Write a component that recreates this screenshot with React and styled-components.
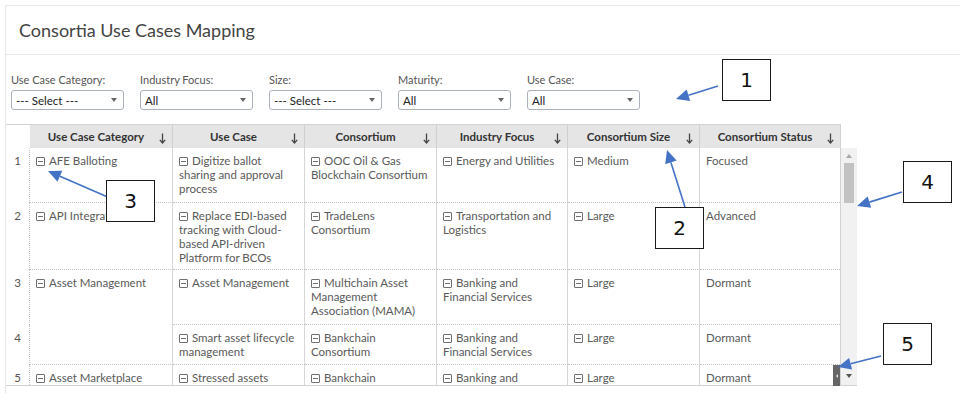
import styled, { createGlobalStyle } from "styled-components";

const GlobalStyle = createGlobalStyle`
  body {
    margin: 0;
    background: #fff;
    font-family: Lato, "Liberation Sans", sans-serif;
  }
`;

const filters = [
  { label: "Use Case Category:", value: "--- Select ---" },
  { label: "Industry Focus:", value: "All" },
  { label: "Size:", value: "--- Select ---" },
  { label: "Maturity:", value: "All" },
  { label: "Use Case:", value: "All" },
];

const columns = [
  "Use Case Category",
  "Use Case",
  "Consortium",
  "Industry Focus",
  "Consortium Size",
  "Consortium Status",
];

const widths = [24, 143, 132, 132, 131, 132, 140];

const rows = [
  {
    h: 55,
    cat: "AFE Balloting",
    useCase: "Digitize ballot sharing and approval process",
    consortium: "OOC Oil & Gas Blockchain Consortium",
    industry: "Energy and Utilities",
    size: "Medium",
    status: "Focused",
  },
  {
    h: 67,
    cat: "API Integration",
    useCase: "Replace EDI-based tracking with Cloud-based API-driven Platform for BCOs",
    consortium: "TradeLens Consortium",
    industry: "Transportation and Logistics",
    size: "Large",
    status: "Advanced",
  },
  {
    h: 55,
    cat: "Asset Management",
    span: 2,
    useCase: "Asset Management",
    consortium: "Multichain Asset Management Association (MAMA)",
    industry: "Banking and Financial Services",
    size: "Large",
    status: "Dormant",
  },
  {
    h: 40,
    skipCat: true,
    useCase: "Smart asset lifecycle management",
    consortium: "Bankchain Consortium",
    industry: "Banking and Financial Services",
    size: "Large",
    status: "Dormant",
  },
  {
    h: 40,
    cat: "Asset Marketplace",
    useCase: "Stressed assets",
    consortium: "Bankchain Consortium",
    industry: "Banking and Financial Services",
    size: "Large",
    status: "Dormant",
  },
];

const callouts = [
  { n: 1, x: 722, y: 59 },
  { n: 2, x: 655, y: 207 },
  { n: 3, x: 106, y: 180 },
  { n: 4, x: 903, y: 161 },
  { n: 5, x: 883, y: 323 },
];

const arrows = [
  [718, 86, 676, 99],
  [685, 207, 667, 150],
  [110, 198, 48, 171],
  [902, 192, 857, 206],
  [881, 356, 838, 367],
];

const Arrow = ({ a }) => {
  const [x1, y1, x2, y2] = a;
  const ang = Math.atan2(y2 - y1, x2 - x1);
  const len = 13;
  const half = 6;
  const bx = x2 - Math.cos(ang) * len;
  const by = y2 - Math.sin(ang) * len;
  const px = -Math.sin(ang) * half;
  const py = Math.cos(ang) * half;
  return (
    <g>
      <line x1={x1} y1={y1} x2={bx} y2={by} stroke="#4472c4" strokeWidth="1.6" />
      <polygon
        points={`${x2},${y2} ${bx + px},${by + py} ${bx - px},${by - py}`}
        fill="#4472c4"
      />
    </g>
  );
};

const SortArrow = () => (
  <SortIcon width="7" height="11" viewBox="0 0 7 11">
    <path d="M3.5 0.5 V10" stroke="#444" strokeWidth="1.3" />
    <path d="M0.8 6.8 L3.5 10 L6.2 6.8" stroke="#444" strokeWidth="1.3" fill="none" />
  </SortIcon>
);

const Value = ({ text }) => (
  <>
    <Toggle />
    {text}
  </>
);

const App = () => {
  return (
    <Root>
      <GlobalStyle />
      <Panel>
        <PanelHeader>
          <Title>Consortia Use Cases Mapping</Title>
        </PanelHeader>
        <Filters>
          {filters.map((f) => (
            <Filter key={f.label}>
              <FilterLabel>{f.label}</FilterLabel>
              <Select>
                <span>{f.value}</span>
                <Caret />
              </Select>
            </Filter>
          ))}
        </Filters>
        <TableArea>
          <TableFrame>
            <Table>
              <colgroup>
                {widths.map((w, i) => (
                  <col key={i} style={{ width: w }} />
                ))}
              </colgroup>
              <thead>
                <tr>
                  <CornerCell />
                  {columns.map((c) => (
                    <HeadCell key={c}>
                      {c}
                      <SortArrow />
                    </HeadCell>
                  ))}
                </tr>
              </thead>
              <tbody>
                {rows.map((r, i) => (
                  <Row key={i} $h={r.h}>
                    <NumCell>{i + 1}</NumCell>
                    {!r.skipCat && (
                      <Cell rowSpan={r.span || 1}>
                        <Value text={r.cat} />
                      </Cell>
                    )}
                    <Cell>
                      <Value text={r.useCase} />
                    </Cell>
                    <Cell>
                      <Value text={r.consortium} />
                    </Cell>
                    <Cell>
                      <Value text={r.industry} />
                    </Cell>
                    <Cell>
                      <Value text={r.size} />
                    </Cell>
                    <Cell>{r.status}</Cell>
                  </Row>
                ))}
              </tbody>
            </Table>
          </TableFrame>
          <ScrollTrack>
            <ScrollUp />
            <Thumb />
            <ScrollDown />
          </ScrollTrack>
        </TableArea>
      </Panel>

      <ResizeGrip>
        <GripArrow />
      </ResizeGrip>

      <Overlay width="960" height="419" viewBox="0 0 960 419">
        {arrows.map((a, i) => (
          <Arrow key={i} a={a} />
        ))}
      </Overlay>

      {callouts.map((c) => (
        <Callout key={c.n} $x={c.x} $y={c.y}>
          {c.n}
        </Callout>
      ))}
    </Root>
  );
};

const Root = styled.div`
  position: relative;
  width: 960px;
  height: 419px;
  overflow: hidden;
  background: #fff;
`;

const Panel = styled.div`
  margin: 5px 0 0 5px;
  border-top: 1px solid #e6e6e6;
  border-left: 1px solid #e6e6e6;
  padding-bottom: 7px;
`;

const PanelHeader = styled.div`
  height: 48px;
  display: flex;
  align-items: center;
  padding-left: 13px;
  border-bottom: 1px solid #e6e6e6;
`;

const Title = styled.h1`
  margin: 0;
  font-family: Lato, "Liberation Sans", sans-serif;
  font-weight: 400;
  font-size: 18px;
  color: #444;
`;

const Filters = styled.div`
  display: flex;
  gap: 16px;
  padding: 18px 0 0 5px;
`;

const Filter = styled.div`
  display: flex;
  flex-direction: column;
  width: 113px;
`;

const FilterLabel = styled.label`
  font-size: 11px;
  line-height: 13px;
  color: #555;
  margin-bottom: 4px;
`;

const Select = styled.div`
  box-sizing: border-box;
  height: 20px;
  display: flex;
  align-items: center;
  justify-content: space-between;
  padding: 0 6px 0 4px;
  border: 1px solid #aab1bd;
  border-radius: 3px;
  background: #fff;
  font-size: 11.5px;
  color: #222;
`;

const Caret = styled.span`
  width: 0;
  height: 0;
  border-left: 3.5px solid transparent;
  border-right: 3.5px solid transparent;
  border-top: 4px solid #666;
`;

const TableArea = styled.div`
  display: flex;
  margin-top: 14px;
  width: 851px;
  border-bottom: 1px solid #d2d2d2;
`;

const TableFrame = styled.div`
  width: 834px;
  height: 261px;
  overflow: hidden;
  border-right: 1px solid #d2d2d2;
`;

const Table = styled.table`
  table-layout: fixed;
  width: 834px;
  border-collapse: separate;
  border-spacing: 0;
  font-family: Lato, "Liberation Sans", sans-serif;
`;

const CornerCell = styled.th`
  height: 24px;
  box-sizing: border-box;
  border-top: 1px solid #d2d2d2;
  background: #fff;
  padding: 0;
`;

const HeadCell = styled.th`
  position: relative;
  height: 24px;
  box-sizing: border-box;
  padding: 0 10px 0 0;
  background: #e5e5e5;
  border-top: 1px solid #d2d2d2;
  border-right: 1px solid #d0d0d0;
  font-size: 11.5px;
  font-weight: 700;
  color: #333;
  text-align: center;
  white-space: nowrap;
  &:last-child {
    border-right: none;
  }
`;

const SortIcon = styled.svg`
  position: absolute;
  right: 6px;
  top: 8px;
`;

const Row = styled.tr`
  height: ${(p) => p.$h}px;
`;

const NumCell = styled.td`
  box-sizing: border-box;
  vertical-align: top;
  padding: 6px 0 0 0;
  text-align: center;
  font-size: 11.5px;
  line-height: 14px;
  color: #555;
  border-right: 1px dotted #c4c4c4;
`;

const Cell = styled.td`
  box-sizing: border-box;
  vertical-align: top;
  padding: 6px 4px 0 6px;
  font-size: 11.5px;
  line-height: 14px;
  color: #5a5a5a;
  border-right: 1px solid #d6d6d6;
  border-bottom: 1px dotted #c4c4c4;
  &:last-child {
    border-right: none;
  }
`;

const Toggle = styled.span`
  position: relative;
  display: inline-block;
  box-sizing: border-box;
  width: 9px;
  height: 9px;
  margin-right: 4px;
  vertical-align: -1px;
  border: 1px solid #707070;
  border-radius: 1px;
  &::after {
    content: "";
    position: absolute;
    left: 1px;
    right: 1px;
    top: 3px;
    height: 1px;
    background: #707070;
  }
`;

const ScrollTrack = styled.div`
  width: 16px;
  margin-top: 24px;
  height: 237px;
  background: #f1f1f1;
  display: flex;
  flex-direction: column;
  align-items: center;
`;

const ScrollUp = styled.span`
  margin-top: 6px;
  width: 0;
  height: 0;
  border-left: 3.5px solid transparent;
  border-right: 3.5px solid transparent;
  border-bottom: 4px solid #a8a8a8;
`;

const Thumb = styled.div`
  width: 10px;
  height: 40px;
  margin-top: 5px;
  background: #c2c2c2;
`;

const ScrollDown = styled.span`
  margin-top: auto;
  margin-bottom: 7px;
  width: 0;
  height: 0;
  border-left: 3.5px solid transparent;
  border-right: 3.5px solid transparent;
  border-top: 4px solid #555;
`;

const ResizeGrip = styled.div`
  position: absolute;
  left: 833px;
  top: 365px;
  width: 7px;
  height: 21px;
  background: #666;
  display: flex;
  align-items: center;
  justify-content: center;
`;

const GripArrow = styled.span`
  width: 0;
  height: 0;
  border-top: 2px solid transparent;
  border-bottom: 2px solid transparent;
  border-right: 2px solid #ddd;
`;

const Overlay = styled.svg`
  position: absolute;
  left: 0;
  top: 0;
  pointer-events: none;
`;

const Callout = styled.div`
  position: absolute;
  left: ${(p) => p.$x}px;
  top: ${(p) => p.$y}px;
  width: 49px;
  height: 42px;
  box-sizing: border-box;
  border: 1.5px solid #1a1a1a;
  background: #fff;
  display: flex;
  align-items: center;
  justify-content: center;
  font-family: "DejaVu Sans", sans-serif;
  font-size: 20px;
  color: #111;
`;

export default App;
